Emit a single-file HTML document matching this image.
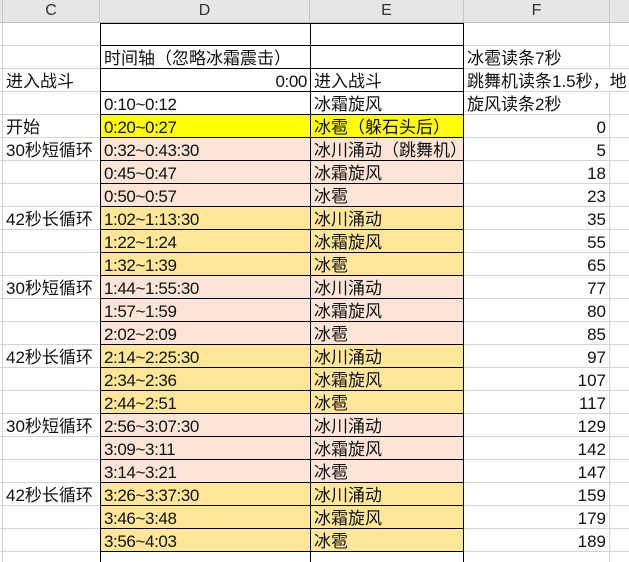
<!DOCTYPE html>
<html><head><meta charset="utf-8"><style>
*{margin:0;padding:0;box-sizing:border-box}
html,body{width:629px;height:562px;overflow:hidden}
body{background:#fff;position:relative;font-family:"Liberation Sans","Noto Sans CJK SC",sans-serif;font-size:17px;color:#111}
.hd{position:absolute;top:0;left:0;width:629px;height:23px;background:#e6e6e6;border-bottom:1px solid #bfbfbf}
.hd div{position:absolute;top:0;height:22px;line-height:22px;text-align:center;border-right:1px solid #c8c8c8;color:#333;font-size:16px}
.r{position:absolute;left:0;height:23px;width:629px}
.r>div{position:absolute;top:0;height:23px;line-height:25px;white-space:nowrap;padding-left:3px}
.n{letter-spacing:-0.4px}
.a{left:0;width:3px;border-right:1px solid #d4d4d4;border-bottom:1px solid #d4d4d4;padding:0!important}
.c{left:3px;width:97px;border-bottom:1px solid #d4d4d4;overflow:hidden}
.d{left:100px;width:210px;border-left:1px solid #000;border-bottom:1px solid #000;overflow:hidden}
.e{left:310px;width:154px;border-left:1px solid #000;border-right:1px solid #000;border-bottom:1px solid #000;overflow:hidden}
.f{left:464px;width:146px;border-right:1px solid #d4d4d4;border-bottom:1px solid #d4d4d4}
.g{left:610px;width:19px;border-bottom:1px solid #d4d4d4}
.rt{text-align:right;padding-right:3px}
.y{background:#ffff00}.p{background:#fce4d6}.o{background:#ffe699}
</style></head><body>
<div class="hd"><div style="left:0;width:3px"></div><div style="left:3px;width:97px">C</div><div style="left:100px;width:210px">D</div><div style="left:310px;width:154px">E</div><div style="left:464px;width:146px">F</div><div style="left:610px;width:19px;border:none"></div></div>
<div style="position:absolute;left:100px;top:23px;width:364px;height:1px;background:#000;z-index:2"></div>

<div class="r" style="top:23px"><div class="a"></div><div class="c"></div><div class="d"></div><div class="e"></div><div class="f"></div><div class="g"></div></div>
<div class="r" style="top:46px"><div class="a"></div><div class="c"></div><div class="d">时间轴（忽略冰霜震击）</div><div class="e"></div><div class="f">冰雹读条7秒</div><div class="g"></div></div>
<div class="r" style="top:69px"><div class="a"></div><div class="c">进入战斗</div><div class="d rt n">0:00</div><div class="e">进入战斗</div><div class="g"></div><div class="f" style="overflow:visible;z-index:3;border-right:none">跳舞机读条1.5秒，地</div></div>
<div class="r" style="top:92px"><div class="a"></div><div class="c"></div><div class="d n">0:10~0:12</div><div class="e">冰霜旋风</div><div class="f">旋风读条2秒</div><div class="g"></div></div>
<div class="r" style="top:115px"><div class="a"></div><div class="c">开始</div><div class="d y n">0:20~0:27</div><div class="e y">冰雹（躲石头后）</div><div class="f rt">0</div><div class="g"></div></div>

<div class="r" style="top:138px"><div class="a"></div><div class="c">30秒短循环</div><div class="d p n">0:32~0:43:30</div><div class="e p">冰川涌动（跳舞机）</div><div class="f rt">5</div><div class="g"></div></div>
<div class="r" style="top:161px"><div class="a"></div><div class="c"></div><div class="d p n">0:45~0:47</div><div class="e p">冰霜旋风</div><div class="f rt">18</div><div class="g"></div></div>
<div class="r" style="top:184px"><div class="a"></div><div class="c"></div><div class="d p n">0:50~0:57</div><div class="e p">冰雹</div><div class="f rt">23</div><div class="g"></div></div>

<div class="r" style="top:207px"><div class="a"></div><div class="c">42秒长循环</div><div class="d o n">1:02~1:13:30</div><div class="e o">冰川涌动</div><div class="f rt">35</div><div class="g"></div></div>
<div class="r" style="top:230px"><div class="a"></div><div class="c"></div><div class="d o n">1:22~1:24</div><div class="e o">冰霜旋风</div><div class="f rt">55</div><div class="g"></div></div>
<div class="r" style="top:253px"><div class="a"></div><div class="c"></div><div class="d o n">1:32~1:39</div><div class="e o">冰雹</div><div class="f rt">65</div><div class="g"></div></div>

<div class="r" style="top:276px"><div class="a"></div><div class="c">30秒短循环</div><div class="d p n">1:44~1:55:30</div><div class="e p">冰川涌动</div><div class="f rt">77</div><div class="g"></div></div>
<div class="r" style="top:299px"><div class="a"></div><div class="c"></div><div class="d p n">1:57~1:59</div><div class="e p">冰霜旋风</div><div class="f rt">80</div><div class="g"></div></div>
<div class="r" style="top:322px"><div class="a"></div><div class="c"></div><div class="d p n">2:02~2:09</div><div class="e p">冰雹</div><div class="f rt">85</div><div class="g"></div></div>

<div class="r" style="top:345px"><div class="a"></div><div class="c">42秒长循环</div><div class="d o n">2:14~2:25:30</div><div class="e o">冰川涌动</div><div class="f rt">97</div><div class="g"></div></div>
<div class="r" style="top:368px"><div class="a"></div><div class="c"></div><div class="d o n">2:34~2:36</div><div class="e o">冰霜旋风</div><div class="f rt">107</div><div class="g"></div></div>
<div class="r" style="top:391px"><div class="a"></div><div class="c"></div><div class="d o n">2:44~2:51</div><div class="e o">冰雹</div><div class="f rt">117</div><div class="g"></div></div>

<div class="r" style="top:414px"><div class="a"></div><div class="c">30秒短循环</div><div class="d p n">2:56~3:07:30</div><div class="e p">冰川涌动</div><div class="f rt">129</div><div class="g"></div></div>
<div class="r" style="top:437px"><div class="a"></div><div class="c"></div><div class="d p n">3:09~3:11</div><div class="e p">冰霜旋风</div><div class="f rt">142</div><div class="g"></div></div>
<div class="r" style="top:460px"><div class="a"></div><div class="c"></div><div class="d p n">3:14~3:21</div><div class="e p">冰雹</div><div class="f rt">147</div><div class="g"></div></div>

<div class="r" style="top:483px"><div class="a"></div><div class="c">42秒长循环</div><div class="d o n">3:26~3:37:30</div><div class="e o">冰川涌动</div><div class="f rt">159</div><div class="g"></div></div>
<div class="r" style="top:506px"><div class="a"></div><div class="c"></div><div class="d o n">3:46~3:48</div><div class="e o">冰霜旋风</div><div class="f rt">179</div><div class="g"></div></div>
<div class="r" style="top:529px"><div class="a"></div><div class="c"></div><div class="d o n">3:56~4:03</div><div class="e o">冰雹</div><div class="f rt">189</div><div class="g"></div></div>
<div class="r" style="top:552px;height:10px"><div class="a"></div><div class="c"></div><div class="d" style="border-bottom:none"></div><div class="e" style="border-bottom:none"></div><div class="f"></div><div class="g"></div></div>
</body></html>
